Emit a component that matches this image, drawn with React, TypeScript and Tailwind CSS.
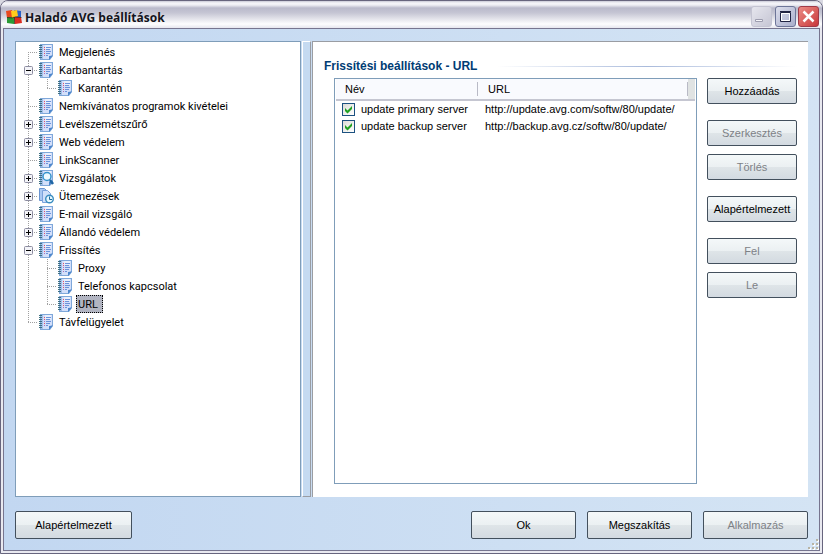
import { useState } from "react";
import type { ReactNode } from "react";

type IconKind = "book" | "scan" | "schedule";

interface TreeItem {
  label: string;
  icon?: IconKind;
  children?: TreeItem[];
  open?: boolean;
}

const tree: TreeItem[] = [
  { label: "Megjelenés" },
  { label: "Karbantartás", open: true, children: [{ label: "Karantén" }] },
  { label: "Nemkívánatos programok kivételei" },
  { label: "Levélszemétszűrő", children: [] },
  { label: "Web védelem", children: [] },
  { label: "LinkScanner" },
  { label: "Vizsgálatok", icon: "scan", children: [] },
  { label: "Ütemezések", icon: "schedule", children: [] },
  { label: "E-mail vizsgáló", children: [] },
  { label: "Állandó védelem", children: [] },
  {
    label: "Frissítés",
    open: true,
    children: [{ label: "Proxy" }, { label: "Telefonos kapcsolat" }, { label: "URL" }],
  },
  { label: "Távfelügyelet" },
];

const servers = [
  { name: "update primary server", url: "http://update.avg.com/softw/80/update/" },
  { name: "update backup server", url: "http://backup.avg.cz/softw/80/update/" },
];

function BookIcon({ kind = "book" }: { kind?: IconKind }) {
  if (kind === "schedule") {
    return (
      <svg width="16" height="16" viewBox="0 0 16 16" className="shrink-0" aria-hidden="true">
        <path d="M1.500 .5h5l2 2v10h-7z" fill="#a9c8f2" stroke="#6a94d0" />
        <path d="M4.500 2.500h5l3 3v9h-8z" fill="#cfe0fa" stroke="#7ba2dc" />
        <circle cx="11.500" cy="11" r="3.800" fill="#e6f7fd" stroke="#3a8cc0" strokeWidth="1.400" />
        <path d="M11.500 8.500V11.500H14" fill="none" stroke="#1d6a9c" />
      </svg>
    );
  }
  return (
    <svg width="16" height="16" viewBox="0 0 16 16" className="shrink-0" aria-hidden="true">
      <path d="M2 0h13v12l-3 4H2z" fill="#7fa8da" />
      <path d="M3 1h11v10l-3 4H3z" fill="#d3dffa" />
      <path d="M7 1h6v4H7z" fill="#e9effd" />
      <path d="M3 1h2v14H3z" fill="#a3bfea" />
      <path d="M15 11.500l-4 .5v4z" fill="#4c86cc" />
      <path d="M1 1.500h3M1 3.500h3M1 5.500h3M1 7.500h3M1 9.500h3M1 11.500h3M1 13.500h3" stroke="#3d6f80" />
      {kind === "book" ? (
        <>
          <path d="M8 3.500h5M8 5.500h4M8 7.500h5M8 9.500h4M8 11.500h2" stroke="#6c93da" />
          <path d="M6 3.500h1M6 5.500h1M6 9.500h1" stroke="#e8506a" />
          <path d="M6 7.500h1M6 11.500h1" stroke="#b070b8" />
        </>
      ) : (
        <>
          <circle cx="9" cy="6.500" r="4" fill="#eefaff" stroke="#3593cc" strokeWidth="1.500" />
          <path d="M12 10l3 4" stroke="#1f66a4" strokeWidth="2.500" />
        </>
      )}
    </svg>
  );
}

/* Dotted guide segment that precedes an icon; the branch turns right at its centre. */
function Guide({ width, x, from, to }: { width: number; x: number; from: number; to: number }) {
  return (
    <svg width={width} height="18" className="shrink-0" aria-hidden="true">
      <path d={`M${x + 0.5} ${from}V${to}`} stroke="#a0a0a0" strokeDasharray="1 1" />
      <path d={`M${x} 9.500H${width}`} stroke="#a0a0a0" strokeDasharray="1 1" />
    </svg>
  );
}

function Tree() {
  const [openState, setOpenState] = useState<Record<string, boolean>>(
    Object.fromEntries(tree.map((item) => [item.label, !!item.open])),
  );
  const [selected, setSelected] = useState("URL");

  const label = (text: string) => (
    <button
      type="button"
      onClick={() => setSelected(text)}
      className={
        selected === text
          ? "ml-[3px] h-[18px] border border-dotted border-black bg-[#b1b4c1] pt-0.5 pr-1 pl-px leading-[14px]"
          : "ml-[3px] h-[18px] px-0.5 pt-0.5 leading-4"
      }
    >
      {text}
    </button>
  );

  return (
    <ul className="pt-px font-[Tahoma,Roboto,sans-serif] text-[11px] whitespace-nowrap text-black">
      {tree.map((item, i) => {
        const open = openState[item.label];
        const last = i === tree.length - 1;
        return (
          <li key={item.label}>
            <div className="flex h-[18px] items-center">
              {item.children ? (
                <button
                  type="button"
                  aria-label={item.label}
                  aria-expanded={open}
                  onClick={() => setOpenState({ ...openState, [item.label]: !open })}
                >
                  <svg width="22" height="18" className="block" aria-hidden="true">
                    <path d="M12.500 0V18M12 9.500H22" fill="none" stroke="#a0a0a0" strokeDasharray="1 1" />
                    <rect x="8.500" y="5.500" width="8" height="8" rx="1" fill="#f4f4f8" stroke="#8c8ca0" />
                    <path d={open ? "M10 9.500h5" : "M10 9.500h5M12.500 7v5"} stroke="#000" />
                  </svg>
                </button>
              ) : (
                <Guide width={22} x={12} from={i === 0 ? 9 : 0} to={last ? 10 : 18} />
              )}
              <BookIcon kind={item.icon} />
              {label(item.label)}
            </div>
            {open && item.children && (
              <ul>
                {item.children.map((child, c) => (
                  <li key={child.label} className="flex h-[18px] items-center">
                    <svg width="22" height="18" className="shrink-0" aria-hidden="true">
                      <path d="M12.500 0V18" stroke="#a0a0a0" strokeDasharray="1 1" />
                    </svg>
                    <Guide width={19} x={9} from={0} to={c === item.children!.length - 1 ? 10 : 18} />
                    <BookIcon />
                    {label(child.label)}
                  </li>
                ))}
              </ul>
            )}
          </li>
        );
      })}
    </ul>
  );
}

function PushButton({ children, disabled, size }: { children: ReactNode; disabled?: boolean; size: string }) {
  return (
    <button
      type="button"
      disabled={disabled}
      className={`rounded-[2px] border border-[#43505d] bg-[linear-gradient(#f4f8f9,#ebf0f2_50%,#dfe5e8_50%,#d3dae1)] text-black disabled:text-[#7d8186] ${size}`}
    >
      {children}
    </button>
  );
}

function ServerList() {
  const [checked, setChecked] = useState([true, true]);
  return (
    <div className="flex-1 border border-[#7f9db9] bg-white px-px">
      <table className="w-full table-fixed border-collapse text-left">
        <colgroup>
          <col className="w-[142px]" />
          <col />
          <col className="w-[7px]" />
        </colgroup>
        <thead>
          <tr className="h-[21px] border-b-2 border-[#c5c6d1] bg-[#f9fafe]">
            <th className="p-0 font-normal">
              <div className="border-r border-[#b9bac6] pl-[9px] leading-[14px]">Név</div>
            </th>
            <th className="p-0 font-normal">
              <div className="border-r border-[#b9bac6] pl-[10px] leading-[14px]">URL</div>
            </th>
            <th className="bg-[#e0e3e3] p-0" aria-hidden="true" />
          </tr>
        </thead>
        <tbody>
          {servers.map((server, i) => (
            <tr key={server.name} className="h-[17px]">
              <td className="p-0 pl-1.5">
                <label className="flex items-center gap-1.5 leading-[17px]">
                  <span className="grid size-[13px] shrink-0">
                    <input
                      type="checkbox"
                      checked={checked[i]}
                      onChange={() => setChecked(checked.map((v, k) => (k === i ? !v : v)))}
                      className="peer col-start-1 row-start-1 size-[13px] appearance-none border border-[#1c5180] bg-linear-to-br from-[#dcdcd7] to-white"
                    />
                    <svg viewBox="0 0 13 13" className="pointer-events-none invisible col-start-1 row-start-1 size-[13px] peer-checked:visible" aria-hidden="true">
                      <path d="M3 5v3l2.500 2.500L10 6V3L5.500 7.500z" fill="#21a121" />
                    </svg>
                  </span>
                  {server.name}
                </label>
              </td>
              <td className="p-0 pl-[7px] leading-[17px] whitespace-nowrap" colSpan={2}>
                {server.url}
              </td>
            </tr>
          ))}
        </tbody>
      </table>
    </div>
  );
}

function TitleBar() {
  return (
    <header className="flex h-[27px] items-center bg-[linear-gradient(#c9c9d6,#f6f6fa_2px,#eeeef4_4px,#b9b9cb_7px,#c6c6d4_12px,#fdfdfe_23px,#e6e6ee)] pt-1 pr-[3px] pl-[5px]">
      <svg width="16" height="16" viewBox="0 0 16 16" aria-hidden="true">
        <path d="M8 1l7 1v7l-6-1z" fill="#2a62c8" />
        <path d="M0 2l6-1 2 7-7 1z" fill="#e8491f" />
        <path d="M1 8h7v7l-7-1z" fill="#2b9a35" />
        <path d="M8 8h7l1 6-7 1z" fill="#dc2c20" />
        <path d="M5 2l6-1 1 6-6 2z" fill="#ffcc1c" />
        <path d="M6 9l2.500-1v7M9 8l6.500 .5M1 8.500l5 .5" fill="none" stroke="#3c2a20" strokeWidth=".8" />
      </svg>
      <h1 className="ml-[3px] flex-1 pt-0.5 font-['Trebuchet_MS','Open_Sans',sans-serif] text-[12px] leading-4 font-bold text-[#14141c]">
        Haladó AVG beállítások
      </h1>
      <div className="flex gap-0.5">
        <button type="button" disabled aria-label="Kis méret" className="size-[21px] rounded-[3px] border border-[#c4c4d2] bg-linear-to-br from-[#e6e6ee] to-[#c6c6d4]">
          <svg viewBox="0 0 19 19" className="block size-[19px]" aria-hidden="true">
            <path d="M3.500 12.500h7v2h-7z" fill="#f4f4f8" stroke="#9c9cae" />
          </svg>
        </button>
        <button type="button" aria-label="Teljes méret" className="ml-px size-[21px] rounded-[3px] border border-[#6d7598] bg-linear-to-br from-[#dcdeec] to-[#a9aecb]">
          <svg viewBox="0 0 19 19" className="block size-[19px]" aria-hidden="true">
            <path d="M4.500 5.500h10v9h-10zM4 4.500h11" fill="none" stroke="#202342" />
            <path d="M5.500 6.500h8v7h-8z" fill="none" stroke="#fff" />
          </svg>
        </button>
        <button type="button" aria-label="Bezárás" className="size-[21px] rounded-[3px] border border-[#a03a48] bg-linear-to-br from-[#ea8a86] to-[#c8343a]">
          <svg viewBox="0 0 19 19" className="block size-[19px]" aria-hidden="true">
            <path d="M4.500 4.500l10 10M14.500 4.500l-10 10" stroke="#fff" strokeWidth="2.500" />
          </svg>
        </button>
      </div>
    </header>
  );
}

export default function App() {
  return (
    <div className="min-h-screen bg-[#d9d9e2]">
      <div className="flex min-h-screen flex-col overflow-hidden rounded-t-lg border border-[#67657e] bg-[#e9e9f0] font-['Liberation_Sans',Arial,sans-serif] text-[11px] text-black">
        <TitleBar />
        <div className="mx-0.5 mb-0.5 flex flex-1 flex-col border border-[#77758f] bg-linear-to-r from-[#c2d7f1] to-[#d4e4f4]">
          <main className="flex flex-1 px-[11px] pt-3">
            <nav aria-label="Beállítások" className="w-[286px] shrink-0 border border-[#7f9db9] bg-white">
              <Tree />
            </nav>
            <div role="separator" aria-orientation="vertical" className="mx-px w-[9px] shrink-0 border-t border-r border-b border-l border-t-white border-r-[#9a9da3] border-b-[#9a9da3] border-l-white bg-[#c5daf1]" />
            <section className="flex flex-1 flex-col border-t border-l border-[#9a9da3] bg-white pr-[11px] pb-[13px] pl-[11px]">
              <div className="mb-1 flex items-center pt-4">
                <h2 className="text-[12px] leading-4 font-bold text-[#003c74]">Frissítési beállítások - URL</h2>
                <div className="ml-5 h-px flex-1 bg-linear-to-r from-white via-[#a9badb] to-white" />
              </div>
              <div className="flex flex-1 pl-2.5">
                <ServerList />
                <div className="ml-[10px] flex w-[90px] flex-col">
                  <PushButton size="h-[26px]">Hozzáadás</PushButton>
                  <PushButton size="mt-4 h-[26px]" disabled>Szerkesztés</PushButton>
                  <PushButton size="mt-2 h-[26px]" disabled>Törlés</PushButton>
                  <PushButton size="mt-4 h-[26px]">Alapértelmezett</PushButton>
                  <PushButton size="mt-4 h-[26px]" disabled>Fel</PushButton>
                  <PushButton size="mt-2 h-[26px]" disabled>Le</PushButton>
                </div>
              </div>
            </section>
          </main>
          <footer className="relative flex gap-[11px] px-[11px] pt-[14px] pb-[11px]">
            <PushButton size="mr-auto h-7 w-[117px]">Alapértelmezett</PushButton>
            <PushButton size="h-7 w-[105px]">Ok</PushButton>
            <PushButton size="h-7 w-[105px]">Megszakítás</PushButton>
            <PushButton size="h-7 w-[105px]" disabled>Alkalmazás</PushButton>
            <svg width="12" height="12" className="absolute right-0 bottom-0" aria-hidden="true">
              <path d="M10 2h2v2h-2zM6 6h2v2H6zM10 6h2v2h-2zM2 10h2v2H2zM6 10h2v2H6zM10 10h2v2h-2z" fill="#fff" />
              <path d="M9 1h2v2H9zM5 5h2v2H5zM9 5h2v2H9zM1 9h2v2H1zM5 9h2v2H5zM9 9h2v2H9z" fill="#b8b4a4" />
            </svg>
          </footer>
        </div>
      </div>
    </div>
  );
}
